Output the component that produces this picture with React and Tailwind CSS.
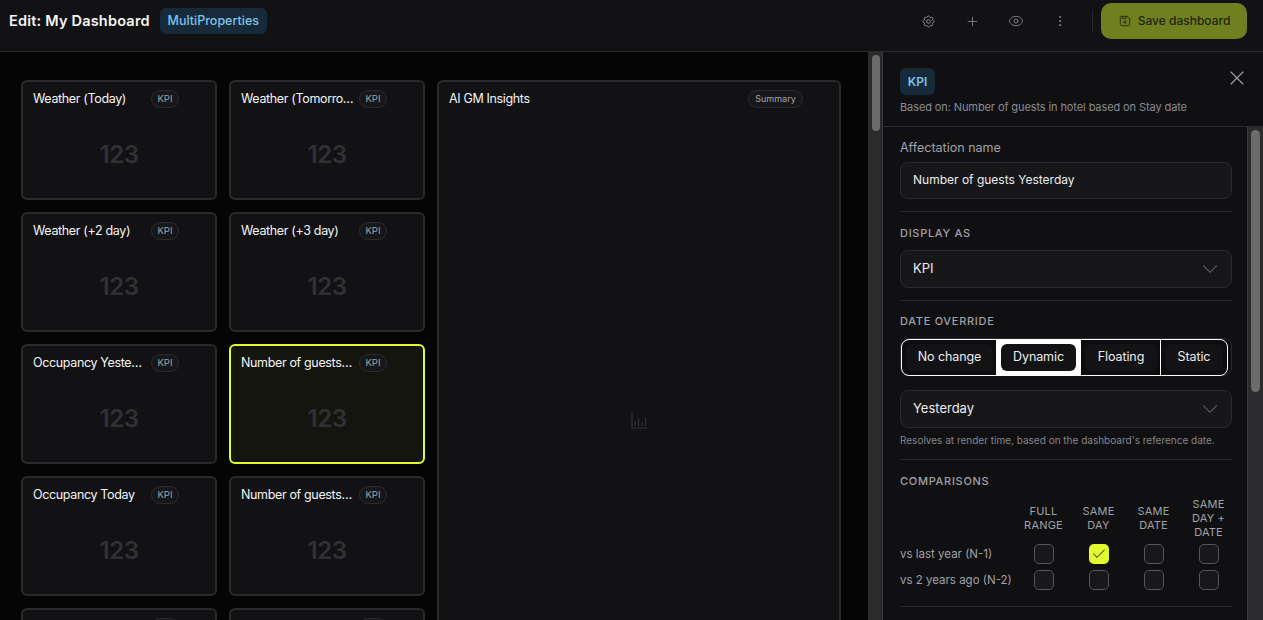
import { Eye, EllipsisVertical, Plus, X, ChevronDown, Check } from 'lucide-react';
import { TbDeviceFloppy, TbSettings } from 'react-icons/tb';

const cards = [
  ['Weather (Today)', 'Weather (Tomorrow)'],
  ['Weather (+2 day)', 'Weather (+3 day)'],
  ['Occupancy Yesterday', 'Number of guests Yesterday'],
  ['Occupancy Today', 'Number of guests Today'],
  ['Occupancy Tomorrow', 'Number of guests Tomorrow'],
];

function Badge({ children, wide }) {
  return (
    <span className={`shrink-0 flex items-center justify-center h-[18px] rounded-full border border-[#2c2c30] bg-[#17171a] text-[#a3a3a6] ${wide ? 'w-[55px] text-[9px]' : 'w-[28px] text-[9.5px]'}`}>
      {children}
    </span>
  );
}

function KpiCard({ title, selected }) {
  return (
    <div className={`h-[120px] rounded-md border-2 flex flex-col px-[10px] pt-[8px] ${selected ? 'border-[#e1fb2e] bg-[#14150f]' : 'border-[#2a2a2c] bg-[#121214]'}`}>
      <div className="flex items-center h-[18px]">
        <span className="w-[113px] truncate text-[12.5px] tracking-[-0.35px] text-[#f4f4f5]">{title}</span>
        <span className="ml-[5px]"><Badge>KPI</Badge></span>
      </div>
      <div className="flex justify-center pt-[30px] text-[24px] tracking-[-0.5px] leading-[34px] font-semibold text-[#313134]">123</div>
    </div>
  );
}

function Field({ children }) {
  return (
    <div className="flex items-center justify-between h-[38px] pl-[12px] pr-[8px] rounded-lg border border-[#2a2a2e] bg-[#17171a] text-[13px] text-[#ececee]">
      <span>{children}</span>
      <ChevronDown size={26} strokeWidth={1} className="text-[#55555a]" />
    </div>
  );
}

function SectionLabel({ children }) {
  return <div className="text-[11px] leading-[16px] font-medium tracking-[0.7px] text-[#a1a1a8]">{children}</div>;
}

function Divider() {
  return <div className="h-px bg-[#28282b]" />;
}

function Box({ checked }) {
  return checked ? (
    <span className="w-[20px] h-[20px] rounded-[5px] bg-[#e1fb2e] flex items-center justify-center text-[#17181a]">
      <Check size={16} strokeWidth={1.5} />
    </span>
  ) : (
    <span className="w-[20px] h-[20px] rounded-[5px] border border-[#55555a] bg-[#18181c]" />
  );
}

function ChartIcon() {
  return (
    <svg width="17" height="17" viewBox="0 0 17 17" fill="none" stroke="#333336" strokeWidth="1.2">
      <path d="M1 0.5V16H16.5" />
      <path d="M4 14V9M7.5 14V6M11 14V10M14.5 14V5.5" />
    </svg>
  );
}

function Segment({ className, children }) {
  return (
    <div className={className}>
      <div className="h-full rounded-md bg-[#131316] flex items-center justify-center">{children}</div>
    </div>
  );
}

export default function App() {
  return (
    <div className="h-[620px] w-[1263px] overflow-hidden flex flex-col bg-[#101012] font-['Inter',sans-serif] text-white">
      <header className="h-[52px] shrink-0 flex items-center border-b border-[#2a2a2c] bg-[#121214] pl-[9px] pr-[16px]">
        <h1 className="text-[14.5px] font-semibold tracking-[0.2px] mb-[9px] text-[#f5f5f5]">Edit: My Dashboard</h1>
        <span className="ml-[10px] mb-[9px] flex items-center justify-center h-[26px] w-[107px] rounded-md bg-[#172a3a] text-[12.5px] font-medium text-[#7cc4ec]">MultiProperties</span>
        <div className="ml-auto flex items-center mb-[9px] text-[#8d8d92]">
          <TbSettings size={15} strokeWidth={1.5} />
          <Plus size={15} strokeWidth={1.25} className="ml-[29px]" />
          <Eye size={16} strokeWidth={1.25} className="ml-[28px]" />
          <EllipsisVertical size={14} strokeWidth={1.5} className="ml-[29px]" />
          <span className="w-px h-[20px] bg-[#2a2a2c] ml-[25px]" />
          <button className="ml-[8px] w-[146px] h-[36px] rounded-[10px] bg-[#71801f] flex items-center justify-center gap-[6px] text-[12px] font-medium text-[#20240c]">
            <TbDeviceFloppy size={14} strokeWidth={1.5} />
            Save dashboard
          </button>
        </div>
      </header>

      <div className="flex flex-1 min-h-0">
        <main className="w-[868px] shrink-0 bg-[#050505] overflow-hidden pl-[21px] pt-[28px]">
          <div className="grid grid-cols-[196px_196px_404px] gap-[12px]">
            {cards.map((row, i) => (
              <div key={i} className="contents">
                <KpiCard title={row[0]} />
                <KpiCard title={row[1]} selected={i === 2} />
                {i === 0 && (
                  <div className="row-span-5 flex flex-col rounded-md border-2 border-[#2a2a2c] bg-[#121214] pl-[10px] pr-[36px] pt-[8px]">
                    <div className="flex items-center justify-between h-[18px]">
                      <span className="text-[12.5px] tracking-[-0.35px] text-[#f4f4f5]">AI GM Insights</span>
                      <Badge wide>Summary</Badge>
                    </div>
                    <div className="flex justify-center pl-[27px] pt-[304px]"><ChartIcon /></div>
                  </div>
                )}
              </div>
            ))}
          </div>
        </main>

        <div className="w-[15px] shrink-0 bg-[#2b2b2d] border-r border-[#3a3a3c] pl-[4px] pt-[3px]">
          <div className="w-[8px] h-[76px] rounded-full bg-[#6b6b6b]" />
        </div>

        <aside className="flex-1 min-w-0 flex flex-col bg-[#101012]">
          <div className="h-[75px] shrink-0 border-b border-[#2a2a2c] pl-[17px] pr-[14px] pt-[16px]">
            <div className="flex justify-between">
              <span className="flex items-center justify-center h-[27px] w-[35px] rounded-md bg-[#172a3a] text-[12px] font-semibold text-[#7cc4ec]">KPI</span>
              <X size={24} strokeWidth={1.1} className="mt-[-2px] text-[#a1a1a8]" />
            </div>
            <p className="mt-[4px] text-[11px] leading-[16px] tracking-[-0.1px] text-[#8b8b92]">Based on: Number of guests in hotel based on Stay date</p>
          </div>

          <div className="flex flex-1 min-h-0">
            <div className="w-[364px] shrink-0 overflow-hidden pl-[17px] pr-[15px] pt-[13px]">
              <label className="block text-[12.5px] leading-[16px] text-[#a1a1a8]">Affectation name</label>
              <div className="mt-[6px] flex items-center h-[37px] px-[12px] pb-px rounded-lg border border-[#2a2a2e] bg-[#17171a] text-[12px] text-[#ececee]">Number of guests Yesterday</div>
              <div className="mt-[12px]"><Divider /></div>

              <div className="mt-[13px]"><SectionLabel>DISPLAY AS</SectionLabel></div>
              <div className="mt-[9px]"><Field>KPI</Field></div>
              <div className="mt-[12px]"><Divider /></div>

              <div className="mt-[12px]"><SectionLabel>DATE OVERRIDE</SectionLabel></div>
              <div className="mt-[9px] h-[38px] rounded-lg border border-[#2a2a2e] bg-[#0d0d0f]">
                <div className="flex h-[37px] w-[327px] rounded-lg border border-white overflow-hidden text-[12.5px] tracking-[-0.1px] text-[#ececee]">
                  <Segment className="w-[94px] p-[4px] pr-[3px]">No change</Segment>
                  <Segment className="w-[85px] bg-white py-[4px] px-[5px]">Dynamic</Segment>
                  <Segment className="w-[80px] border-r border-white p-[4px] pr-[3px]">Floating</Segment>
                  <Segment className="flex-1 p-[4px]">Static</Segment>
                </div>
              </div>
              <div className="mt-[14px]"><Field>Yesterday</Field></div>
              <p className="mt-[5px] text-[10px] leading-[14px] text-[#85858c]">Resolves at render time, based on the dashboard's reference date.</p>
              <div className="mt-[12px]"><Divider /></div>

              <div className="mt-[13px]"><SectionLabel>COMPARISONS</SectionLabel></div>
              <div className="mt-[8px] grid grid-cols-[116px_55px_55px_55px_55px] items-center text-[#a1a1a8]">
                {['', 'FULL RANGE', 'SAME DAY', 'SAME DATE', 'SAME DAY + DATE'].map((h, i) => (
                  <div key={i} className="h-[42px] flex items-center justify-center text-center text-[11px] leading-[14px] tracking-[0.2px] px-[6px]">{h}</div>
                ))}
                <div className="text-[11.5px] leading-[26px] mt-[2px]">vs last year (N-1)</div>
                {[false, true, false, false].map((c, i) => (
                  <div key={i} className="flex justify-center mt-[2px]"><Box checked={c} /></div>
                ))}
                <div className="text-[11.5px] leading-[26px]">vs 2 years ago (N-2)</div>
                {[0, 1, 2, 3].map((i) => (
                  <div key={i} className="flex justify-center"><Box /></div>
                ))}
              </div>
              <div className="mt-[13px]"><Divider /></div>
            </div>
            <div className="flex-1 bg-[#2b2b2d] border-l border-[#3a3a3c] pl-[3px] pt-[3px]">
              <div className="w-[9px] h-[262px] rounded-full bg-[#6b6b6b]" />
            </div>
          </div>
        </aside>
      </div>
    </div>
  );
}
